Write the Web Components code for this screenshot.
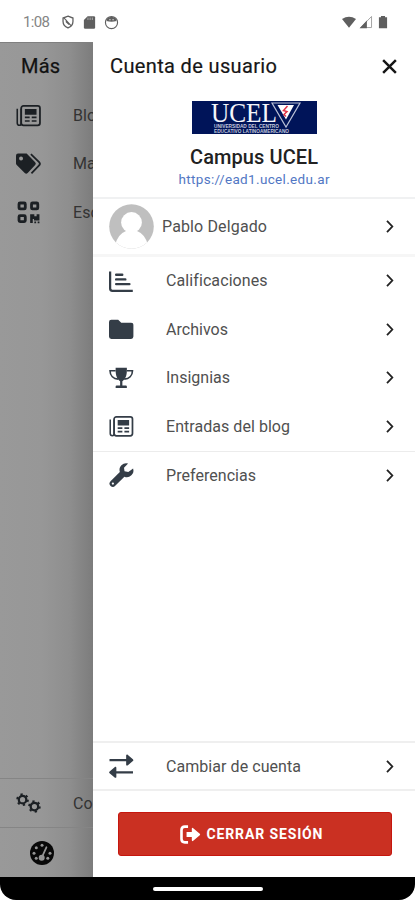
<!DOCTYPE html>
<html lang="es">
<head>
<meta charset="utf-8">
<title>Cuenta de usuario</title>
<style>
html,body{margin:0;height:100%;background:#fff}
body{font-family:Roboto,"Liberation Sans",sans-serif;overflow:hidden}
</style>
</head>
<body>
<account-screen></account-screen>
<script>
const ICONS={
 news:`<path d="M1.200 5.500v13.700q0 2.200 2.100 2.200 1.700 0 1.700-2.200V5.500" fill="none" stroke="currentColor" stroke-width="1.500"/><rect x="5" y="2.800" width="18" height="18.600" rx="2.200" fill="none" stroke="currentColor" stroke-width="1.700"/><path d="M8.500 5.800h11.200v5.400H8.500zM8.500 13h4.600v1.600H8.500zM15.100 13h4.600v1.600h-4.600zM8.500 16.500h4.600v1.600H8.500zM15.100 16.500h4.600v1.600h-4.600z"/>`,
 tags:`<path fill-rule="evenodd" d="M0 4.500A2 2 0 0 1 2 2.500h8.200l8.200 8.200a2 2 0 0 1 0 2.800l-7.200 7.600a2 2 0 0 1-2.800 0L.7 13.400A2 2 0 0 1 0 12zM4.800 5.300a1.900 1.900 0 1 0 .1 3.800 1.900 1.900 0 0 0-.1-3.800z"/><path d="M14.300 3l7.900 7.700q1.500 1.600 0 3.200l-7.400 7.600" fill="none" stroke="currentColor" stroke-width="1.700"/>`,
 qr:`<g fill="none" stroke="currentColor" stroke-width="2.700"><rect x="2.900" y="2.900" width="6" height="5.700" rx="1"/><rect x="14.900" y="2.900" width="6" height="5.700" rx="1"/><rect x="2.900" y="15" width="6" height="5.700" rx="1"/></g><path d="M13.600 13.700h4v2h2.200v-2h2.700v6h-5.200v-1.400h-1.200v3.800h-2.500zM17.600 20.700h1.700v1.500h-1.700zM20.800 20.700h1.700v1.500h-1.700z"/>`,
 chart:`<path d="M1.100 2.500v16.700q0 2.200 2.200 2.200h20" fill="none" stroke="currentColor" stroke-width="2.200"/><path d="M7 5.600h6M7 10.200h9M7 14.800h13" stroke="currentColor" stroke-width="2.300" stroke-linecap="round"/>`,
 folder:`<path d="M0 5a2.300 2.300 0 0 1 2.300-2.300H9L12 5.600h9.600A2.300 2.300 0 0 1 23.900 8v11.200a2.300 2.300 0 0 1-2.300 2.300H2.300A2.300 2.300 0 0 1 0 19.200z"/>`,
 trophy:`<path d="M6.500 1.600h11v2.500c0 6.200-1.800 8.600-4.400 10.900v4h3.400q1 0 1 1.100v1.500h-11v-1.500q0-1.100 1-1.100h3.400v-4C8.300 12.700 6.500 10.300 6.500 4.100z"/><path d="M6.500 4.600H1c0 4.800 3.300 7.900 8.100 8.300M17.500 4.600H23c0 4.800-3.300 7.900-8.100 8.300" fill="none" stroke="currentColor" stroke-width="1.600"/>`,
 wrench:`<path fill-rule="evenodd" d="M23.600 5.300a6.500 6.500 0 0 1-8.500 8.100l-9 9a3.200 3.200 0 0 1-4.600-4.500l9.100-9.100A6.600 6.600 0 0 1 18.700.5l-4 4.100.5 3.600 3.700.6zM3.800 19.100a1.100 1.100 0 1 0 0 2.200 1.100 1.100 0 0 0 0-2.200z"/>`,
 swap:`<path d="M.5 6h18.500M5 18h18.500" stroke="currentColor" stroke-width="2"/><path d="M16.800 1.300c.3-.9 1.100-.9 1.700-.3l4.900 4.100q.9.900 0 1.800l-4.900 4.100c-.7.500-1.400.4-1.700-.3zM7.200 13.300c-.3-.9-1.100-.9-1.700-.3L.6 17.100q-.9.900 0 1.800L5.500 23c.7.500 1.400.4 1.700-.3z"/>`,
 gears:`<g fill="none" stroke="currentColor"><circle cx="6.300" cy="8.300" r="3.600" stroke-width="2.200"/><circle cx="6.300" cy="8.300" r="5.200" stroke-width="1.700" stroke-dasharray="2.200 3.245"/><circle cx="17.700" cy="14.900" r="3.600" stroke-width="2.200"/><circle cx="17.700" cy="14.900" r="5.200" stroke-width="1.700" stroke-dasharray="2.200 3.245"/></g>`,
 gauge:`<circle cx="12" cy="12" r="12"/><g fill="#949494"><circle cx="12" cy="4.300" r="1.500"/><circle cx="6.300" cy="6.700" r="1.500"/><circle cx="4" cy="12.200" r="1.500"/><circle cx="20" cy="12.200" r="1.500"/><circle cx="6.200" cy="17.200" r="1.500"/><circle cx="17.800" cy="17.200" r="1.500"/><circle cx="11.700" cy="16.700" r="3"/></g><path d="M12 16L16.400 6.300" stroke="#949494" stroke-width="1.800" stroke-linecap="round"/>`,
 chevron:`<path d="M8 3l8.500 9L8 21" fill="none" stroke="currentColor" stroke-width="2.900"/>`,
 close:`<path d="M3 3l18 18M21 3L3 21" stroke="currentColor" stroke-width="3.500"/>`,
 exit:`<path d="M9.200 3H5.500Q1.700 3 1.700 6.800v10.400Q1.700 21 5.500 21h3.700" fill="none" stroke="currentColor" stroke-width="3"/><path d="M7.500 9.200h6V5.600q0-2 1.600-.7l7.500 6.200q1 .9 0 1.800l-7.500 6.200q-1.600 1.300-1.600-.7v-3.600h-6z"/>`,
 shield:`<path d="M12 2l8.500 3.200v6q0 7.500-8.500 11-8.500-3.500-8.500-11v-6z" fill="none" stroke="currentColor" stroke-width="2.200"/><path d="M5 5l13 14M9 8v4l5 4.500" fill="none" stroke="currentColor" stroke-width="1.800"/>`,
 sd:`<path d="M9 2h10q2 0 2 2v16q0 2-2 2H5q-2 0-2-2V8z"/><path d="M9.500 4v4M13 4v4M16.500 4v4" stroke="#bbb" stroke-width="1.300"/>`,
 face:`<circle cx="12" cy="12" r="9.700" fill="#fff" stroke="currentColor" stroke-width="1.800"/><path d="M5 5.500Q12 0 19 5.500l1 4q-8 2.500-16 0z"/><path d="M8.500 7.600h2M13.500 7.600h2" stroke="#fff" stroke-width="1.500"/>`,
 wifi:`<path d="M0 7Q12-1 24 7L12 22z"/>`,
 signal:`<path d="M3 21.500h18.500V2.500z" fill="#fff" stroke="#999" stroke-width="1.500"/><path d="M1 22.500h12.500V9.500z"/>`,
 battery:`<path d="M8.500 1.500h7V4H19v18.500H5V4h3.500z"/>`
};
const define=(name,html,setup)=>customElements.define(name,class extends HTMLElement{
 constructor(){super();this.attachShadow({mode:'open'}).innerHTML=html}
 connectedCallback(){if(setup)setup(this,this.shadowRoot)}
});

define('ui-icon',`<style>:host{display:block;flex:none}svg{display:block;width:100%;height:100%;overflow:visible}</style><svg viewBox="0 0 24 24" fill="currentColor"></svg>`,(el,r)=>{
 const s=el.getAttribute('size')||24;el.style.width=el.style.height=s+'px';
 r.querySelector('svg').innerHTML=ICONS[el.getAttribute('name')];
});

/* Single-line label whose tracking is adjusted to a given width. */
define('fit-text',`<style>:host{display:block;white-space:nowrap;flex:none}span{display:inline-block}</style><span></span>`,(el,r)=>{
 const s=r.querySelector('span'),t=el.getAttribute('text'),w=+el.getAttribute('w');
 s.textContent=t;
 const n=s.getBoundingClientRect().width;
 const ls=(w-n)/(t.length-1);
 s.style.letterSpacing=ls+'px';s.style.marginRight=-ls+'px';
});

define('status-bar',`<style>
:host{display:flex;align-items:center;height:42px;box-sizing:border-box;padding:2px 25px 0 23px;color:#5f5f5f;background:#fff}
.t{font-size:15px;color:#858585;margin-right:11px}
ui-icon+ui-icon{margin-left:7px}.r{margin-left:auto;display:flex}.r ui-icon+ui-icon{margin-left:3px}
</style><fit-text class="t" w="27" text="1:08"></fit-text><ui-icon name="shield" size="14"></ui-icon><ui-icon name="sd" size="15"></ui-icon><ui-icon name="face" size="15"></ui-icon>
<div class="r"><ui-icon name="wifi" size="14"></ui-icon><ui-icon name="signal" size="14"></ui-icon><ui-icon name="battery" size="14"></ui-icon></div>`);

define('back-row',`<style>:host{display:flex;align-items:center;height:48.500px;box-sizing:border-box;padding-left:16px;color:#1c2024;flex:none}
ui-icon{margin-right:32px}span{font-size:16px;letter-spacing:.1px;color:#333;white-space:nowrap}</style><ui-icon size="25"></ui-icon><span><slot></slot></span>`,(el,r)=>{
 const i=r.querySelector('ui-icon');i.setAttribute('name',el.getAttribute('icon'));
 i.shadowRoot.querySelector('svg').innerHTML=ICONS[el.getAttribute('icon')];
});

define('more-page',`<style>
:host{display:flex;flex-direction:column;overflow:hidden;background:linear-gradient(90deg,#999 0,#979797 45%,#8e8e8e 75%,#7c7c7c 100%);border-top:1px solid #808080;box-sizing:border-box}
h1{margin:0;height:48px;box-sizing:border-box;padding:11px 0 0 21px;font-weight:400;font-size:20px;line-height:24px;color:#111;-webkit-text-stroke:.25px #111}
.s{flex:1}.c{border-top:1px solid #858585;height:49px}
.tab{height:49px;border-top:1px solid #858585;display:flex;align-items:center;padding-left:30px;color:#080808}
</style><h1><fit-text w="39" text="Más"></fit-text></h1>
<back-row icon="news">Blog</back-row><back-row icon="tags">Marcas</back-row><back-row icon="qr">Escanear</back-row>
<div class="s"></div><back-row class="c" icon="gears">Config</back-row><div class="tab"><ui-icon name="gauge" size="24"></ui-icon></div>`);

define('menu-row',`<style>:host{display:flex;align-items:center;height:48.500px;box-sizing:border-box;padding:0 18px 0 16px;color:#343d47;flex:none;font-size:16px}
.l{margin-left:32.500px;color:#505050}.ch{margin-left:auto;color:#222}</style><span class="i"></span><span class="l"></span><ui-icon class="ch" name="chevron" size="15"></ui-icon>`,(el,r)=>{
 r.querySelector('.i').innerHTML=`<ui-icon name="${el.getAttribute('icon')}" size="24.500"></ui-icon>`;
 r.querySelector('.l').innerHTML=`<fit-text w="${el.getAttribute('w')}" text="${el.getAttribute('label')}"></fit-text>`;
});

define('site-logo',`<style>:host{display:block;width:125px;height:33px}svg{display:block}</style>
<svg width="125" height="33" viewBox="0 0 125 33"><path fill="#001459" d="M0 0h125v33H0z"/>
<g fill="#f4f5fa" font-family="Liberation Serif"><text x="19" y="20.500" font-size="27" textLength="66" lengthAdjust="spacingAndGlyphs">UCEL</text></g>
<g fill="#c3c8dc" font-family="Liberation Sans" font-weight="700"><text x="22" y="26.600" font-size="4.600" textLength="65" lengthAdjust="spacingAndGlyphs">UNIVERSIDAD DEL CENTRO</text><text x="22" y="31.800" font-size="4.600" textLength="75" lengthAdjust="spacingAndGlyphs">EDUCATIVO LATINOAMERICANO</text></g>
<path d="M80 2h28L94 26z" fill="none" stroke="#b9c0d6" stroke-width="1.200"/><path d="M85.500 4h16.500L94 18.500z" fill="#fff"/><path d="M95.500 5l-4 4.500 3.500 1-3 3 2 2" fill="none" stroke="#df3346" stroke-width="1.500"/></svg>`);

define('user-avatar',`<style>:host{display:block;width:45px;height:45px;flex:none}svg{display:block}</style><svg width="45" height="45" viewBox="0 0 45 45"><defs><clipPath id="c"><circle cx="22.500" cy="22.500" r="22.300"/></clipPath></defs><g clip-path="url(#c)"><path fill="#bfbfbf" d="M0 0h45v45H0z"/><g fill="#fff"><circle cx="22.500" cy="18.500" r="10.400"/><path d="M6 41Q9 30 17 27h11Q36 30 39 41v4H6z"/></g></g></svg>`);

define('account-panel',`<style>
:host{display:flex;flex-direction:column;background:#fff;color:#222}
header{height:49px;box-sizing:border-box;display:flex;align-items:center;justify-content:space-between;padding:0 17px 1px 17px;font-size:20px;color:#161616;-webkit-text-stroke:.2px #161616}
.site{height:108px;box-sizing:border-box;padding-top:10px;display:flex;flex-direction:column;align-items:center;border-bottom:2px solid #f0f1f2}
.n{font-size:20px;font-weight:500;line-height:24px;margin-top:11px}.u{font-size:13.500px;line-height:16px;margin-top:2px;color:#5277c4}
.user{height:57.500px;box-sizing:border-box;border-bottom:3px solid #f6f6f6;display:flex;align-items:center;padding:1px 18px 0 16px;font-size:16px;color:#505050}
.user fit-text{margin-left:8px}.user .ch{margin-left:auto;color:#222}
.line{border-top:1.500px solid #ececec}.s{flex:1}.switch{height:50px;border-top:2px solid #efefef;border-bottom:2px solid #efefef}
footer{height:86px;box-sizing:border-box;padding:21px 23px 0 25px}
button{display:flex;width:100%;height:44px;border:1px solid #c6160e;border-radius:3px;background:#ca3022;color:#fff;align-items:center;justify-content:center;padding:0 8px 0 0;font:700 14px Roboto,"Liberation Sans",sans-serif;gap:6px}
</style>
<header><fit-text w="167" text="Cuenta de usuario"></fit-text><ui-icon name="close" size="17"></ui-icon></header>
<div class="site"><site-logo></site-logo><fit-text class="n" w="128" text="Campus UCEL"></fit-text><fit-text class="u" w="151" text="https://ead1.ucel.edu.ar"></fit-text></div>
<div class="user"><user-avatar></user-avatar><fit-text w="105" text="Pablo Delgado"></fit-text><ui-icon class="ch" name="chevron" size="15"></ui-icon></div>
<menu-row icon="chart" w="101" label="Calificaciones"></menu-row>
<menu-row icon="folder" w="62" label="Archivos"></menu-row>
<menu-row icon="trophy" w="64" label="Insignias"></menu-row>
<menu-row icon="news" w="124" label="Entradas del blog"></menu-row>
<menu-row class="line" icon="wrench" w="90" label="Preferencias"></menu-row>
<div class="s"></div>
<menu-row class="switch" icon="swap" w="135" label="Cambiar de cuenta"></menu-row>
<footer><button><ui-icon name="exit" size="21"></ui-icon><fit-text w="116" text="CERRAR SESIÓN"></fit-text></button></footer>`);

define('nav-bar',`<style>:host{display:flex;height:23px;box-sizing:border-box;background:#000;justify-content:center;align-items:center;border-radius:0 0 16px 16px}i{width:110px;height:4px;border-radius:2px;background:#fff;margin-left:1px}</style><i></i>`);

define('account-screen',`<style>:host{display:grid;grid-template-rows:42px 1fr 23px;height:900px;width:415px;overflow:hidden;background:#fff}.m{display:grid;grid-template-columns:93px 322px;min-height:0}</style>
<status-bar></status-bar><div class="m"><more-page></more-page><account-panel></account-panel></div><nav-bar></nav-bar>`);
</script>
</body>
</html>
